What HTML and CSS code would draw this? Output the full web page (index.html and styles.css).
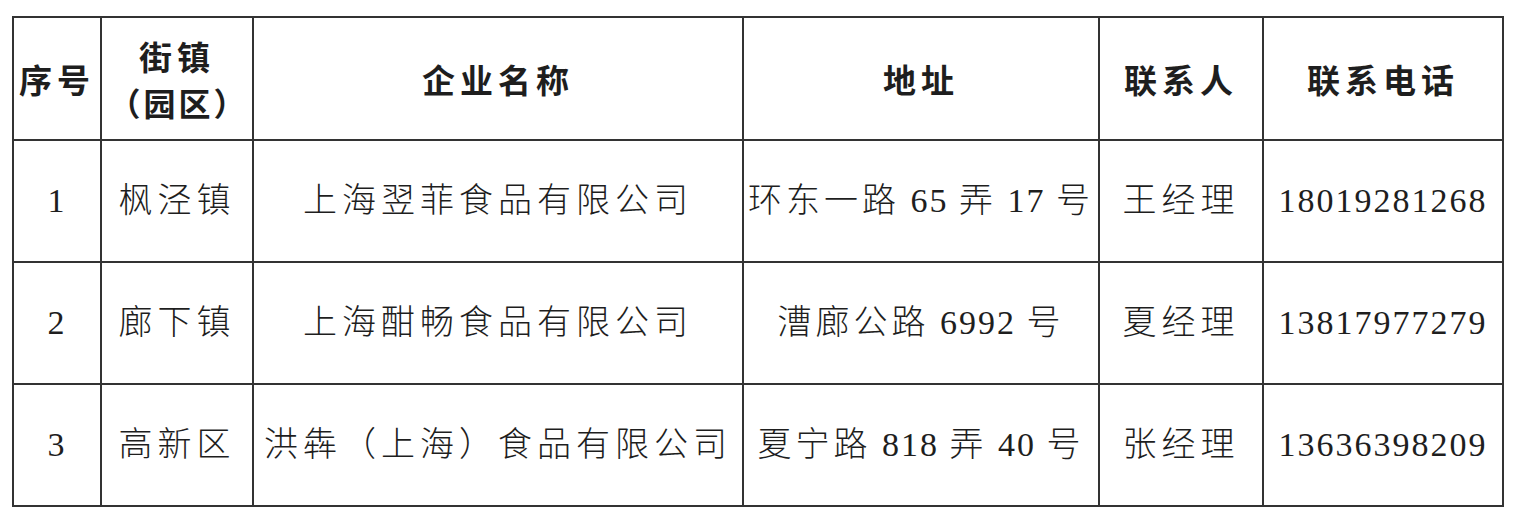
FILE: index.html
```html
<!DOCTYPE html>
<html lang="zh-CN">
<head>
<meta charset="utf-8">
<title>企业名单</title>
<link rel="stylesheet" href="styles.css">
</head>
<body>
<table class="list">
  <colgroup>
    <col class="c1"><col class="c2"><col class="c3"><col class="c4"><col class="c5"><col class="c6">
  </colgroup>
  <thead>
    <tr class="head">
      <th>序号</th>
      <th><span class="l">街镇</span><span class="l wide">（园区）</span></th>
      <th>企业名称</th>
      <th>地址</th>
      <th>联系人</th>
      <th>联系电话</th>
    </tr>
  </thead>
  <tbody>
    <tr>
      <td><span class="n">1</span></td>
      <td>枫泾镇</td>
      <td>上海翌菲食品有限公司</td>
      <td class="addr">环东一路 <span class="n">65</span> 弄 <span class="n">17</span> 号</td>
      <td>王经理</td>
      <td><span class="n">18019281268</span></td>
    </tr>
    <tr>
      <td><span class="n">2</span></td>
      <td>廊下镇</td>
      <td>上海酣畅食品有限公司</td>
      <td class="addr">漕廊公路 <span class="n">6992</span> 号</td>
      <td>夏经理</td>
      <td><span class="n">13817977279</span></td>
    </tr>
    <tr>
      <td><span class="n">3</span></td>
      <td>高新区</td>
      <td>洪犇（上海）食品有限公司</td>
      <td class="addr">夏宁路 <span class="n">818</span> 弄 <span class="n">40</span> 号</td>
      <td>张经理</td>
      <td><span class="n">13636398209</span></td>
    </tr>
  </tbody>
</table>
</body>
</html>
```
FILE: styles.css
```css
html, body {
  margin: 0;
  background: #ffffff;
}
body {
  padding: 16px 0 0 12px;
}
.list {
  border-collapse: collapse;
  table-layout: fixed;
  width: 1490px;
  color: #1e1e1e;
  font-family: "Liberation Serif", "Noto Sans CJK SC", serif;
}
.c1 { width: 88px; }
.c2 { width: 152px; }
.c3 { width: 490px; }
.c4 { width: 356px; }
.c5 { width: 164px; }
.c6 { width: 240px; }
.list th, .list td {
  border: 2px solid #333333;
  text-align: center;
  vertical-align: middle;
  padding: 0;
  white-space: nowrap;
}
.list th {
  height: 121px;
  font-family: "Noto Sans CJK SC", sans-serif;
  font-weight: 700;
  font-size: 33px;
  letter-spacing: 5px;
  line-height: 46px;
}
.list th .l {
  display: block;
}
.list th .wide {
  font-size: 32px;
  letter-spacing: 3px;
  margin-right: -3px;
}
.list td {
  height: 120px;
  font-family: "Liberation Serif", "Noto Sans CJK SC", serif;
  font-weight: 300;
  font-size: 34px;
  letter-spacing: 5px;
  line-height: 40px;
}
.list td.addr {
  letter-spacing: 4px;
  word-spacing: -2px;
}
.list td .n {
  letter-spacing: 2px;
  font-weight: 400;
}
```
